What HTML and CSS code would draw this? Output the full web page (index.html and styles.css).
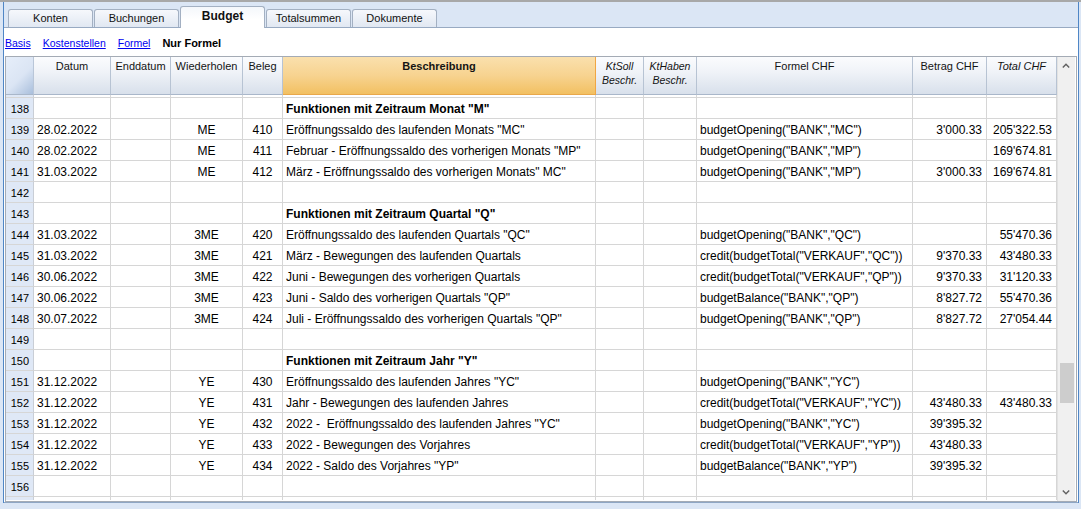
FILE: index.html
```html
<!DOCTYPE html>
<html lang="de">
<head>
<meta charset="utf-8">
<title>Budget</title>
<link rel="stylesheet" href="styles.css">
</head>
<body>
<div class="window">
  <div class="tabs">
    <div class="tab">Konten</div>
    <div class="tab">Buchungen</div>
    <div class="tab active">Budget</div>
    <div class="tab">Totalsummen</div>
    <div class="tab">Dokumente</div>
  </div>
  <div class="panel">
    <div class="views">
      <a class="view" href="#">Basis</a>
      <a class="view" href="#">Kostenstellen</a>
      <a class="view" href="#">Formel</a>
      <span class="view current">Nur Formel</span>
    </div>
    <div class="grid">
      <div class="sheet">
        <div class="row head">
          <div class="c corner"></div>
          <div class="c">Datum</div>
          <div class="c">Enddatum</div>
          <div class="c">Wiederholen</div>
          <div class="c">Beleg</div>
          <div class="c sel"><b>Beschreibung</b></div>
          <div class="c it small">KtSoll<br>Beschr.</div>
          <div class="c it small">KtHaben<br>Beschr.</div>
          <div class="c">Formel CHF</div>
          <div class="c">Betrag CHF</div>
          <div class="c it">Total CHF</div>
        </div>
        <div class="row stub"><div class="c n"></div><div class="c"></div><div class="c"></div><div class="c"></div><div class="c"></div><div class="c"></div><div class="c"></div><div class="c"></div><div class="c"></div><div class="c"></div><div class="c"></div></div>

        <div class="row"><div class="c n">138</div><div class="c"></div><div class="c"></div><div class="c"></div><div class="c"></div><div class="c t"><b>Funktionen mit Zeitraum Monat "M"</b></div><div class="c"></div><div class="c"></div><div class="c"></div><div class="c"></div><div class="c"></div></div>
        <div class="row"><div class="c n">139</div><div class="c t">28.02.2022</div><div class="c"></div><div class="c m">ME</div><div class="c m">410</div><div class="c t">Eröffnungssaldo des laufenden Monats "MC"</div><div class="c"></div><div class="c"></div><div class="c t">budgetOpening("BANK","MC")</div><div class="c r">3'000.33</div><div class="c r">205'322.53</div></div>
        <div class="row"><div class="c n">140</div><div class="c t">28.02.2022</div><div class="c"></div><div class="c m">ME</div><div class="c m">411</div><div class="c t">Februar - Eröffnungssaldo des vorherigen Monats "MP"</div><div class="c"></div><div class="c"></div><div class="c t">budgetOpening("BANK","MP")</div><div class="c r"></div><div class="c r">169'674.81</div></div>
        <div class="row"><div class="c n">141</div><div class="c t">31.03.2022</div><div class="c"></div><div class="c m">ME</div><div class="c m">412</div><div class="c t">März - Eröffnungssaldo des vorherigen Monats" MC"</div><div class="c"></div><div class="c"></div><div class="c t">budgetOpening("BANK","MP")</div><div class="c r">3'000.33</div><div class="c r">169'674.81</div></div>
        <div class="row"><div class="c n">142</div><div class="c"></div><div class="c"></div><div class="c"></div><div class="c"></div><div class="c"></div><div class="c"></div><div class="c"></div><div class="c"></div><div class="c"></div><div class="c"></div></div>
        <div class="row"><div class="c n">143</div><div class="c"></div><div class="c"></div><div class="c"></div><div class="c"></div><div class="c t"><b>Funktionen mit Zeitraum Quartal "Q"</b></div><div class="c"></div><div class="c"></div><div class="c"></div><div class="c"></div><div class="c"></div></div>
        <div class="row"><div class="c n">144</div><div class="c t">31.03.2022</div><div class="c"></div><div class="c m">3ME</div><div class="c m">420</div><div class="c t">Eröffnungssaldo des laufenden Quartals "QC"</div><div class="c"></div><div class="c"></div><div class="c t">budgetOpening("BANK","QC")</div><div class="c r"></div><div class="c r">55'470.36</div></div>
        <div class="row"><div class="c n">145</div><div class="c t">31.03.2022</div><div class="c"></div><div class="c m">3ME</div><div class="c m">421</div><div class="c t">März - Bewegungen des laufenden Quartals</div><div class="c"></div><div class="c"></div><div class="c t">credit(budgetTotal("VERKAUF","QC"))</div><div class="c r">9'370.33</div><div class="c r">43'480.33</div></div>
        <div class="row"><div class="c n">146</div><div class="c t">30.06.2022</div><div class="c"></div><div class="c m">3ME</div><div class="c m">422</div><div class="c t">Juni - Bewegungen des vorherigen Quartals</div><div class="c"></div><div class="c"></div><div class="c t">credit(budgetTotal("VERKAUF","QP"))</div><div class="c r">9'370.33</div><div class="c r">31'120.33</div></div>
        <div class="row"><div class="c n">147</div><div class="c t">30.06.2022</div><div class="c"></div><div class="c m">3ME</div><div class="c m">423</div><div class="c t">Juni - Saldo des vorherigen Quartals "QP"</div><div class="c"></div><div class="c"></div><div class="c t">budgetBalance("BANK","QP")</div><div class="c r">8'827.72</div><div class="c r">55'470.36</div></div>
        <div class="row"><div class="c n">148</div><div class="c t">30.07.2022</div><div class="c"></div><div class="c m">3ME</div><div class="c m">424</div><div class="c t">Juli - Eröffnungssaldo des vorherigen Quartals "QP"</div><div class="c"></div><div class="c"></div><div class="c t">budgetOpening("BANK","QP")</div><div class="c r">8'827.72</div><div class="c r">27'054.44</div></div>
        <div class="row"><div class="c n">149</div><div class="c"></div><div class="c"></div><div class="c"></div><div class="c"></div><div class="c"></div><div class="c"></div><div class="c"></div><div class="c"></div><div class="c"></div><div class="c"></div></div>
        <div class="row"><div class="c n">150</div><div class="c"></div><div class="c"></div><div class="c"></div><div class="c"></div><div class="c t"><b>Funktionen mit Zeitraum Jahr "Y"</b></div><div class="c"></div><div class="c"></div><div class="c"></div><div class="c"></div><div class="c"></div></div>
        <div class="row"><div class="c n">151</div><div class="c t">31.12.2022</div><div class="c"></div><div class="c m">YE</div><div class="c m">430</div><div class="c t">Eröffnungssaldo des laufenden Jahres "YC"</div><div class="c"></div><div class="c"></div><div class="c t">budgetOpening("BANK","YC")</div><div class="c r"></div><div class="c r"></div></div>
        <div class="row"><div class="c n">152</div><div class="c t">31.12.2022</div><div class="c"></div><div class="c m">YE</div><div class="c m">431</div><div class="c t">Jahr - Bewegungen des laufenden Jahres</div><div class="c"></div><div class="c"></div><div class="c t">credit(budgetTotal("VERKAUF","YC"))</div><div class="c r">43'480.33</div><div class="c r">43'480.33</div></div>
        <div class="row"><div class="c n">153</div><div class="c t">31.12.2022</div><div class="c"></div><div class="c m">YE</div><div class="c m">432</div><div class="c t">2022 - &nbsp;Eröffnungssaldo des laufenden Jahres "YC"</div><div class="c"></div><div class="c"></div><div class="c t">budgetOpening("BANK","YC")</div><div class="c r">39'395.32</div><div class="c r"></div></div>
        <div class="row"><div class="c n">154</div><div class="c t">31.12.2022</div><div class="c"></div><div class="c m">YE</div><div class="c m">433</div><div class="c t">2022 - Bewegungen des Vorjahres</div><div class="c"></div><div class="c"></div><div class="c t">credit(budgetTotal("VERKAUF","YP"))</div><div class="c r">43'480.33</div><div class="c r"></div></div>
        <div class="row"><div class="c n">155</div><div class="c t">31.12.2022</div><div class="c"></div><div class="c m">YE</div><div class="c m">434</div><div class="c t">2022 - Saldo des Vorjahres "YP"</div><div class="c"></div><div class="c"></div><div class="c t">budgetBalance("BANK","YP")</div><div class="c r">39'395.32</div><div class="c r"></div></div>
        <div class="row"><div class="c n">156</div><div class="c"></div><div class="c"></div><div class="c"></div><div class="c"></div><div class="c"></div><div class="c"></div><div class="c"></div><div class="c"></div><div class="c"></div><div class="c"></div></div>

        <div class="row stub end"><div class="c n"></div><div class="c"></div><div class="c"></div><div class="c"></div><div class="c"></div><div class="c"></div><div class="c"></div><div class="c"></div><div class="c"></div><div class="c"></div><div class="c"></div></div>
      </div>
      <div class="vscroll">
        <div class="arrow"><svg width="8" height="5" viewBox="0 0 8 5"><polyline points="0.8,4.5 4,1.2 7.2,4.5" fill="none" stroke="#606060" stroke-width="1.4"/></svg></div>
        <div class="track"><div class="thumb"></div></div>
        <div class="arrow down"><svg width="8" height="5" viewBox="0 0 8 5"><polyline points="0.8,0.5 4,3.8 7.2,0.5" fill="none" stroke="#606060" stroke-width="1.4"/></svg></div>
      </div>
    </div>
  </div>
</div>
</body>
</html>
```
FILE: styles.css
```css
* { box-sizing: border-box; }

html, body {
  margin: 0;
  padding: 0;
}

body {
  width: 1081px;
  height: 509px;
  overflow: hidden;
  background: #dbe6f5;
  border-top: 2px solid #a8a8a8;
  font-family: "Liberation Sans", Arial, sans-serif;
  color: #000;
}

.window {
  margin: 0 2px 0 3px;
  height: 501px;
  border-left: 1px solid #4f86c6;
  border-right: 1px solid #4f86c6;
  display: flex;
  flex-direction: column;
}

/* ---------- tabs ---------- */
.tabs {
  height: 25px;
  display: flex;
  align-items: flex-end;
  padding-left: 4px;
  gap: 1px;
  position: relative;
  z-index: 2;
}

.tab {
  width: 85px;
  height: 18px;
  border: 1px solid #a3b0c2;
  border-bottom: none;
  border-radius: 3px 3px 0 0;
  background: linear-gradient(#f6f8fc, #e1e8f2);
  font-size: 11px;
  line-height: 17px;
  text-align: center;
  color: #111;
}

.tab.active {
  height: 22px;
  margin-bottom: -1px;
  background: linear-gradient(#f4f7fb, #ffffff 60%);
  font-size: 12px;
  font-weight: bold;
  line-height: 19px;
}

/* ---------- panel ---------- */
.panel {
  background: #fff;
  border-top: 1px solid #98aac2;
  border-bottom: 1px solid #8ea6c4;
  display: flex;
  flex-direction: column;
  height: 476px;
}

.views {
  height: 28px;
  padding: 8px 0 0 1px;
  display: flex;
  align-items: baseline;
  gap: 12px;
  font-size: 10.5px;
  line-height: 14px;
}

.view {
  color: #0000f0;
  text-decoration: underline;
}

.view.current {
  color: #000;
  font-size: 11px;
  font-weight: bold;
  text-decoration: none;
}

/* ---------- grid ---------- */
.grid {
  margin: 0 1px;
  height: 446px;
  border: 1px solid #a4abb5;
  display: flex;
}

.sheet {
  width: 1051px;
  display: flex;
  flex-direction: column;
}

.row {
  display: grid;
  grid-template-columns: 28px 77px 60px 72px 40px 313px 48px 53px 216px 74px 70px;
  height: 21px;
  font-size: 12px;
}

.c {
  border-right: 1px solid #d6d6d6;
  border-bottom: 1px solid #d6d6d6;
  padding: 2px 3px 0;
  line-height: 18px;
  white-space: nowrap;
  overflow: hidden;
}

.c.n {
  background: #dfe8f6;
  border-right-color: #c9ced6;
  text-align: right;
  padding-right: 4px;
  font-size: 11px;
}

.c.m { text-align: center; }
.c.r { text-align: right; padding-right: 4px; }
.c.t { padding-left: 3px; }

.row.stub { height: 3px; }
.row.stub .c { line-height: 2px; padding: 0; }
.row.stub.end .c { border-bottom: none; }

/* header */
.row.head {
  height: 38px;
  font-size: 11px;
}

.row.head .c {
  background: linear-gradient(#fbfcfe, #f0f3f8 40%, #d8e0eb);
  border-right: 1px solid #b7c3d3;
  border-bottom: 1px solid #a9b7ca;
  text-align: center;
  line-height: 14px;
  padding: 2px 2px 0;
  color: #141414;
}

.row.head .c.corner {
  background: linear-gradient(135deg, #e6eefa 0%, #dbe5f4 55%, #a9bfdc 100%);
  border-right-color: #b9c6d8;
}

.row.head .c.sel {
  background: linear-gradient(#fae0ad, #f7d390 50%, #f2c062);
  border-right: 1px solid #f0a643;
  border-bottom: 1px solid #e9a84b;
}

.row.head .c.it {
  font-style: italic;
}

.row.head .c.small {
  line-height: 13.5px;
  padding-top: 3px;
  font-size: 10.5px;
}

/* scrollbar */
.vscroll {
  width: 18px;
  background: #f0f0f0;
  border-left: 1px solid #e2e2e2;
  display: flex;
  flex-direction: column;
}

.arrow {
  height: 17px;
  display: flex;
  justify-content: center;
  align-items: center;
  padding-right: 1px;
}

.track {
  flex: 1;
  padding-top: 289px;
}

.thumb {
  height: 40px;
  margin: 0 1px 0 2px;
  background: #cdcdcd;
}
```
